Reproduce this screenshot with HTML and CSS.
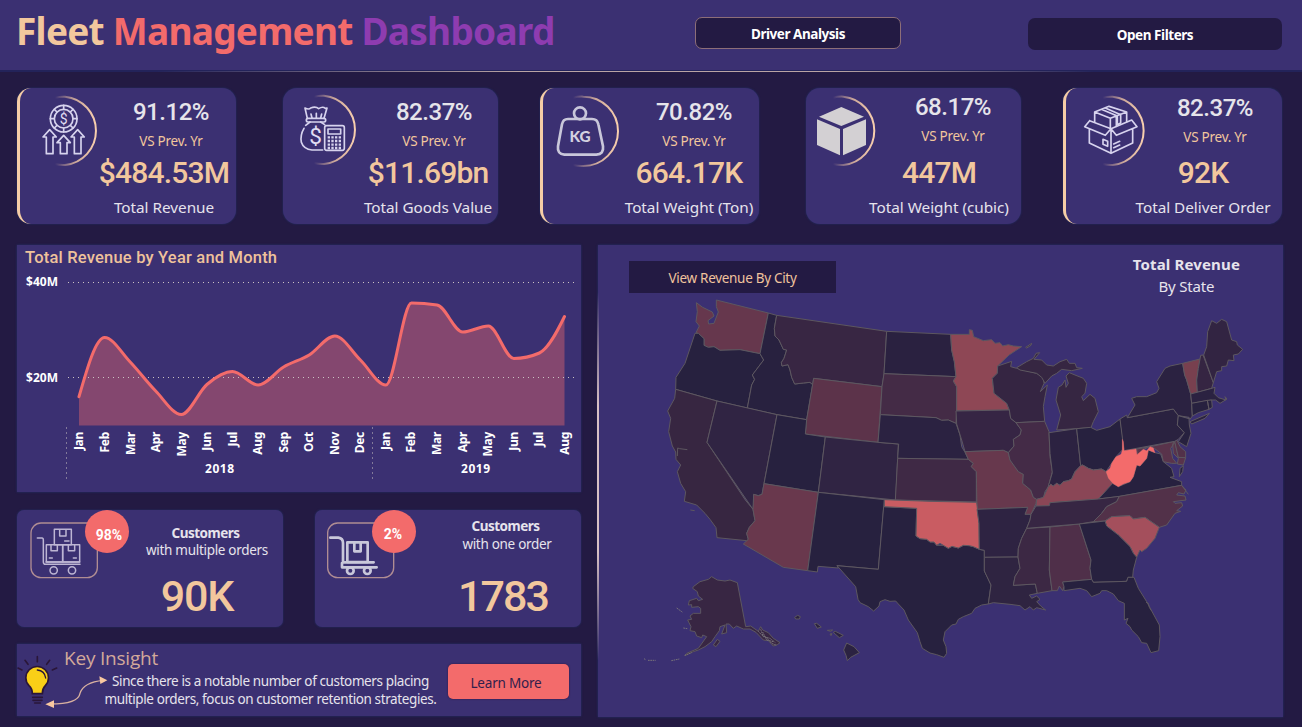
FILE: index.html
```html
<!DOCTYPE html>
<html lang="en">
<head>
<meta charset="utf-8">
<title>Fleet Management Dashboard</title>
<link rel="stylesheet" href="styles.css">
</head>
<body>
<svg class="defs" width="0" height="0">
  <defs>
    <linearGradient id="arc" x1="0" x2="1" y1="0" y2="0">
      <stop offset="0" stop-color="#f2c7a5" stop-opacity="0"/>
      <stop offset=".5" stop-color="#f2c7a5" stop-opacity=".8"/>
      <stop offset="1" stop-color="#f8cfae"/>
    </linearGradient>
  </defs>
</svg>
<header class="header">
  <h1 class="title"><span class="t1">Fleet</span> <span class="t2">Management</span> <span class="t3">Dashboard</span></h1>
  <button class="btn btn-driver">Driver Analysis</button>
  <button class="btn btn-filter">Open Filters</button>
</header>

<section class="kpis">
  <article class="kpi accent k1">
    <div class="kpi-top">
      <svg class="kpi-icon" viewBox="90 288 210 210">
        <path class="arc" stroke="url(#arc)" d="M165 293A103 103 0 0 1 195 290A103 103 0 0 1 195 495A103 103 0 0 1 165 492"/>
        <g class="ink">
          <circle cx="191" cy="356" r="40"/><circle cx="191" cy="356" r="28"/>
          <path d="M191 316v12M191 384v12M151 356h12M219 356h12M163 328l8 8M211 376l8 8M219 328l-8 8M171 376l-8 8"/>
          <path d="M149 389l20 22h-10v50h-20v-50h-10zM191 406l20 22h-10v33h-20v-33h-10zM233 389l20 22h-10v50h-20v-50h-10z"/>
        </g>
        <text class="dollar" x="191" y="371" font-size="42">$</text>
      </svg>
      <div class="stat"><b>91.12%</b><span>VS Prev. Yr</span></div>
    </div>
    <div class="total"><strong>$484.53M</strong><span>Total Revenue</span></div>
  </article>
  <article class="kpi k2">
    <div class="kpi-top">
      <svg class="kpi-icon" viewBox="867 288 210 210">
        <path class="arc" stroke="url(#arc)" d="M942 290A103 103 0 0 1 972 287A103 103 0 0 1 972 492A103 103 0 0 1 942 489"/>
        <g class="ink">
          <path d="M922 355l-7-31q12 6 17 0q15-6 24 2q12-8 20-1l5-1l-9 31M936 354l-3-12M949 354v-14M962 354l3-12"/>
          <rect x="919" y="355" width="58" height="11" rx="5"/>
          <path d="M930 366l-13 10M912 385q-12 20-8 42q7 21 32 23h32M962 366l12 8"/>
          <rect x="974" y="377" width="59" height="74" rx="6"/><rect x="984" y="387" width="38" height="15"/>
        </g>
        <path class="keys" d="M983 412h40M983 423h40M983 434h40M983 444h40"/>
        <text class="dollar" x="947" y="432" font-size="68">$</text>
      </svg>
      <div class="stat"><b>82.37%</b><span>VS Prev. Yr</span></div>
    </div>
    <div class="total"><strong>$11.69bn</strong><span>Total Goods Value</span></div>
  </article>
  <article class="kpi accent k3">
    <div class="kpi-top">
      <svg class="kpi-icon" viewBox="345 288 210 210">
        <path class="arc" stroke="url(#arc)" d="M417 293A103 103 0 0 1 448 290A104 104 0 0 1 448 498A103 103 0 0 1 417 495"/>
        <g class="ink thick">
          <circle cx="438" cy="340" r="18"/>
          <path d="M402 357h72q16 0 19 16l14 66q3 24-20 25H391q-22-2-19-25l12-66q3-16 18-16z"/>
        </g>
        <text class="kg" x="438" y="427">KG</text>
      </svg>
      <div class="stat"><b>70.82%</b><span>VS Prev. Yr</span></div>
    </div>
    <div class="total"><strong>664.17K</strong><span>Total Weight (Ton)</span></div>
  </article>
  <article class="kpi k4">
    <div class="kpi-top">
      <svg class="kpi-icon" viewBox="1122 288 210 210">
        <path class="arc" stroke="url(#arc)" d="M1197 293A103 103 0 0 1 1228 290A103 103 0 0 1 1228 495A103 103 0 0 1 1197 492"/>
        <path fill="#d3d0d3" d="M1222 321l68 29l-68 28l-67-28zM1149 358l69 29v79l-69-31zM1296 358l-69 29v79l69-31z"/>
      </svg>
      <div class="stat"><b>68.17%</b><span>VS Prev. Yr</span></div>
    </div>
    <div class="total"><strong>447M</strong><span>Total Weight (cubic)</span></div>
  </article>
  <article class="kpi accent k5">
    <div class="kpi-top">
      <svg class="kpi-icon" viewBox="627 288 210 210">
        <path class="arc" stroke="url(#arc)" d="M704 293A103 103 0 0 1 734 290A103 103 0 0 1 734 495A103 103 0 0 1 704 492"/>
        <g class="ink">
          <path d="M680 365v-29l43-17l53 17v29M680 336l47 19l49-19M727 355v30M700 328l48 20v26l10-5v-25l-46-20M745 349v30"/>
          <path d="M665 362l-15 18l62 26l17-20l-64-24M729 386l16 20l62-26l-16-20l-62 26M664 388v41l65 31l65-31v-41M729 388v72"/>
          <path d="M705 418l14 6v15l-14-6zM737 432l18-8M737 443l18-8"/>
        </g>
      </svg>
      <div class="stat"><b>82.37%</b><span>VS Prev. Yr</span></div>
    </div>
    <div class="total"><strong>92K</strong><span>Total Deliver Order</span></div>
  </article>
</section>

<main class="main">
  <div class="left">
    <section class="panel chart">
      <h2>Total Revenue by Year and Month</h2>
      <svg viewBox="17 270 564 222" width="564" height="222">
        <path class="area" d="M79,396.7 C87.5,367 96,337.5 104.6,337.5 C113.1,337.5 121.6,353.1 130.2,362 C138.7,370.9 147.2,382.3 155.7,391 C164.2,399.7 172.8,414.5 181.3,414.5 C189.8,414.5 198.4,391.7 206.9,384.5 C215.4,377.3 224,371.5 232.5,371.5 C241,371.5 249.6,385 258.1,385 C266.6,385 275.1,372 283.6,367 C292.1,362 300.7,360.2 309.2,355 C317.7,349.8 326.3,336 334.8,336 C343.3,336 351.9,351.8 360.4,360 C368.9,368.2 377.4,385 385.9,385 C394.4,385 403,303 411.5,303 C420,303 428.6,303.7 437.1,305 C445.6,306.3 454.2,332 462.7,332 C471.2,332 479.8,326 488.3,326 C496.8,326 505.3,358.5 513.8,358.5 C522.3,358.5 530.9,356.7 539.4,353 C547.9,349.3 556.5,333 564.5,316.5 V425.5 H79Z"/>
        <path class="grid" d="M68 282.5H575M68 377.5H575"/>
        <path class="grid" d="M66.5 427.5V480M372.5 427.5V480"/>
        <path class="line" d="M79,396.7 C87.5,367 96,337.5 104.6,337.5 C113.1,337.5 121.6,353.1 130.2,362 C138.7,370.9 147.2,382.3 155.7,391 C164.2,399.7 172.8,414.5 181.3,414.5 C189.8,414.5 198.4,391.7 206.9,384.5 C215.4,377.3 224,371.5 232.5,371.5 C241,371.5 249.6,385 258.1,385 C266.6,385 275.1,372 283.6,367 C292.1,362 300.7,360.2 309.2,355 C317.7,349.8 326.3,336 334.8,336 C343.3,336 351.9,351.8 360.4,360 C368.9,368.2 377.4,385 385.9,385 C394.4,385 403,303 411.5,303 C420,303 428.6,303.7 437.1,305 C445.6,306.3 454.2,332 462.7,332 C471.2,332 479.8,326 488.3,326 C496.8,326 505.3,358.5 513.8,358.5 C522.3,358.5 530.9,356.7 539.4,353 C547.9,349.3 556.5,333 564.5,316.5"/>
        <g class="axis">
          <text x="26" y="286" textLength="32">$40M</text><text x="26" y="382" textLength="32">$20M</text>
          <text x="205" y="473" textLength="29">2018</text><text x="461" y="473" textLength="29">2019</text>
          <g class="months">
            <text transform="translate(83 432) rotate(-90)">Jan</text><text transform="translate(109 432) rotate(-90)">Feb</text><text transform="translate(135 432) rotate(-90)">Mar</text><text transform="translate(160 432) rotate(-90)">Apr</text><text transform="translate(186 432) rotate(-90)">May</text><text transform="translate(211 432) rotate(-90)">Jun</text><text transform="translate(237 432) rotate(-90)">Jul</text><text transform="translate(262 432) rotate(-90)">Aug</text><text transform="translate(288 432) rotate(-90)">Sep</text><text transform="translate(313 432) rotate(-90)">Oct</text><text transform="translate(339 432) rotate(-90)">Nov</text><text transform="translate(364 432) rotate(-90)">Dec</text><text transform="translate(390 432) rotate(-90)">Jan</text><text transform="translate(415 432) rotate(-90)">Feb</text><text transform="translate(441 432) rotate(-90)">Mar</text><text transform="translate(467 432) rotate(-90)">Apr</text><text transform="translate(492 432) rotate(-90)">May</text><text transform="translate(518 432) rotate(-90)">Jun</text><text transform="translate(543 432) rotate(-90)">Jul</text><text transform="translate(569 432) rotate(-90)">Aug</text>
          </g>
        </g>
      </svg>
    </section>

    <div class="customers">
      <section class="panel cust c1">
        <div class="cart">
          <svg viewBox="90 65 207 171" width="69" height="57">
            <rect class="frame" x="93" y="68" width="199" height="164" rx="30"/>
            <g class="ink">
              <path d="M112 113h14q4 0 4 6v66q0 7 7 7h103M138 185h101"/>
              <rect x="163" y="87" width="51" height="46"/><rect x="139" y="133" width="49" height="52"/><rect x="188" y="133" width="51" height="52"/>
              <path d="M179 88v19h19v-19M153 134v17h19v-17M205 134v17h19v-17M194 122h13M148 173h9M220 173h9"/>
              <circle cx="161" cy="210" r="11"/><circle cx="216" cy="210" r="11"/>
            </g>
          </svg>
          <span class="badge">98%</span>
        </div>
        <div class="cust-text"><b>Customers</b><span>with multiple orders</span><strong>90K</strong></div>
      </section>
      <section class="panel cust c2">
        <div class="cart">
          <svg viewBox="81 65 207 171" width="69" height="57">
            <rect class="frame" x="83" y="68" width="198" height="164" rx="30"/>
            <g class="ink thick">
              <path d="M91 112h24q14 2 14 16v58h92M126 188v13h104"/>
              <rect x="142" y="126" width="61" height="59"/><path d="M163 126v27h19v-27"/>
              <circle cx="151" cy="211" r="10"/><circle cx="202" cy="211" r="10"/>
            </g>
          </svg>
          <span class="badge">2%</span>
        </div>
        <div class="cust-text"><b>Customers</b><span>with one order</span><strong>1783</strong></div>
      </section>
    </div>

    <section class="panel insight">
      <svg viewBox="51 435 276 216" width="92" height="72">
        <g fill="none" stroke="#2a1638" stroke-width="5" stroke-linecap="round">
          <path d="M112 473v15M75 484l9 12M149 484l-9 12M54 507l12 6M170 507l-13 6"/>
          <path fill="#f9cf17" d="M97 584q0-15-10-24a34 34 0 1 1 49 0q-9 9-9 24z"/>
          <path d="M112 513q22 2 25 24" stroke-width="4"/>
          <path d="M98 595h29M99 604h27M104 612h17"/>
        </g>
        <path fill="none" stroke="#d8b0a0" stroke-width="4" d="M150 615q85 0 90-32q10-33 70-39"/>
        <path fill="#f8c8a0" d="M322 544l-24-12l3 23zM136 616l26-12v23z"/>
      </svg>
      <div class="insight-text">
        <h3>Key Insight</h3>
        <p>Since there is a notable number of customers placing<br>multiple orders, focus on customer retention strategies.</p>
      </div>
      <button class="learn">Learn More</button>
    </section>
  </div>

  <section class="panel map">
    <div class="map-head">
      <button class="city">View Revenue By City</button>
      <div class="map-title"><b>Total Revenue</b><span>By State</span></div>
    </div>
    <svg class="states" viewBox="-126 15 2055 1266" width="685" height="422">
      <g>
        <path fill="#66374d" d="M169,38 188,52 217,66 222,78 204,92 206,102 222,100 228,84 235,66 229,50 229,30 385,69 360,191 300,179 240,181 222,170 205,172 192,166 192,146 175,130 168,128 178,108 168,95 172,65Z"/>
        <path fill="#27213f" d="M165,130 175,130 192,146 192,166 205,172 222,170 240,181 300,179 360,191 371,210 337,255 344,268 335,285 322,354 231,333 107,298 108,262 135,220Z"/>
        <path fill="#28213f" d="M385,69 410,76 403,115 405,138 417,150 430,178 440,180 432,205 424,218 426,228 444,224 450,240 455,262 464,282 490,279 510,277 518,284 500,389 411,374 322,354 335,285 344,268 337,255 371,210 360,191Z"/>
        <path fill="#382643" d="M410,76 740,124 732,252 726,290 521,265 518,284 510,277 490,279 464,282 455,262 450,240 444,224 426,228 424,218 432,205 440,180 430,178 417,150 405,138 403,115Z"/>
        <path fill="#5c334a" d="M521,265 726,290 714,457 496,432 500,389Z"/>
        <path fill="#372641" d="M107,298 231,333 201,457 316,630 339,658 345,692 328,712 320,730 325,748 320,752 231,743 228,713 210,688 195,670 170,645 133,634 137,605 122,580 112,545 122,525 108,508 107,486 97,468 86,425 92,385 83,363 104,325Z"/>
        <path d="M112,498 113,474 119,476 142,479" fill="none"/>
        <path fill="#302443" d="M231,333 411,374 372,581 366,613 355,617 341,613 341,640 339,658 201,457Z"/>
        <path fill="#27213f" d="M411,374 500,389 496,432 556,441 535,607 372,581Z"/>
        <path fill="#302443" d="M556,441 714,457 775,462 767,630 535,607Z"/>
        <path fill="#69384d" d="M372,581 535,607 503,842 430,832 310,762 325,748 320,730 328,712 345,692 339,658 341,613 355,617 366,613Z"/>
        <path fill="#27213f" d="M535,607 733,629 715,838 591,827 595,834 534,829 532,846 503,842Z"/>
      </g>
      <g transform="translate(660 0)">
        <path fill="#2a2140" d="M80,124 272,133 275,180 283,215 288,260 72,251Z"/>
        <path fill="#442b46" d="M72,251 288,260 280,273 290,290 290,362 288,400 265,390 245,391 228,383 61,374 66,290Z"/>
        <path fill="#8e4755" d="M272,133 328,133 328,119 337,121 341,140 370,152 395,149 405,160 420,158 428,168 445,164 460,168 485,170 447,195 413,228 412,250 397,265 402,310 440,340 448,360 290,362 290,290 280,273 288,260 283,215 275,180Z"/>
        <path fill="#2b2241" d="M61,374 228,383 245,391 265,390 288,400 300,435 305,470 315,487 325,508 113,505 116,462 54,457Z"/>
        <path fill="#362544" d="M288,363 448,360 452,385 468,398 484,420 480,435 460,448 462,468 445,488 430,481 315,485 305,450 290,402Z"/>
        <path fill="#3f2945" d="M113,505 325,508 340,520 334,530 349,545 349,636 106,630Z"/>
        <path fill="#67384d" d="M315,485 430,481 445,488 450,510 475,545 490,553 488,580 512,600 520,622 530,628 528,640 513,673 495,673 503,652 351,658 349,545 334,530 340,520 325,508Z"/>
        <path fill="#352542" d="M413,228 455,214 452,230 470,235 530,250 550,262 552,280 541,305 562,285 555,320 550,350 554,394 468,398 452,385 448,360 440,340 402,310 397,265 412,250Z"/>
        <path fill="#362642" d="M470,233 500,215 520,205 528,190 539,188 522,208 545,210 560,225 580,228 600,215 620,208 628,220 645,220 650,233 667,235 635,242 605,238 590,250 575,258 555,280 545,262 530,250 480,240ZM497,172 515,160 513,166 500,174Z"/>
        <path fill="#442b47" d="M468,398 554,394 567,425 570,500 577,545 565,590 555,605 550,625 530,628 520,622 512,600 488,580 490,553 475,545 450,510 445,488 462,468 460,448 480,435 484,420Z"/>
      </g>
      <g transform="translate(1200 30)">
        <path fill="#362642" d="M88,218 105,225 130,235 140,250 135,280 125,290 130,302 150,283 165,295 175,335 160,365 153,383 50,390 62,345 48,300 55,262 66,255 75,240 78,262 85,250 78,228Z"/>
        <path fill="#2c2241" d="M27,398 110,386 122,497 105,515 95,537 85,542 70,545 60,556 50,550 40,558 32,553 24,562 37,518 30,460Z"/>
        <path fill="#27213f" d="M110,386 152,382 170,391 210,380 240,357 250,420 247,450 228,470 215,490 198,515 185,507 160,510 145,505 128,495 122,497Z"/>
        <path fill="#8a4656" d="M122,497 128,495 145,505 160,510 185,507 198,515 205,535 218,550 190,590 175,598 30,608 28,618 -12,620 -10,598 10,592 18,575 24,562 32,553 40,558 50,550 60,556 70,545 85,542 95,537 105,515Z"/>
        <path fill="#27213f" d="M345,458 362,462 370,485 395,505 402,530 390,532 425,545 425,556 235,590 175,597 218,550 235,560 270,545 280,530 290,495 300,498 320,475 325,450ZM430,497 428,515 418,530 420,505Z"/>
        <path fill="#59334b" d="M290,447 345,437 404,424 400,434 392,445 398,475 410,490 395,490 370,485 365,462 343,445 330,440 310,448 292,465ZM404,424 409,445 415,472 437,473 430,495 412,492 415,475 400,460 398,432Z"/>
        <path fill="#523149" d="M404,424 411,421 420,440 437,455 437,473 415,472Z"/>
        <path fill="#2a2240" d="M240,357 260,345 262,353 400,327 415,347 412,375 433,398 415,418 404,424 252,452Z"/>
        <path fill="#f36b6b" class="hot" d="M247,418 250,425 252,452 288,447 291,464 310,448 320,452 330,440 340,444 345,458 325,450 320,475 300,498 290,495 280,530 270,545 250,552 235,560 218,550 205,535 198,515 210,505 215,490 228,470 243,463 247,450Z"/>
        <path fill="#2b2241" d="M262,353 285,315 275,295 290,290 320,290 350,278 357,265 350,245 375,205 390,198 428,190 434,225 440,240 452,282 455,310 457,348 450,358 447,352 415,347 400,327ZM450,365 480,352 508,340 495,355 455,372Z"/>
        <path fill="#27213f" d="M415,347 447,356 448,375 453,400 440,440 415,425 433,398 412,375Z"/>
        <path fill="#78404f" d="M428,190 480,177 475,205 470,240 472,277 452,282 440,240 434,225Z"/>
        <path fill="#352542" d="M480,177 482,166 489,165 520,248 515,265 472,277 470,240 475,205Z"/>
        <path fill="#322442" d="M491,165 500,140 503,95 515,62 530,70 545,58 560,65 575,120 590,125 592,135 608,148 595,162 580,165 582,182 565,180 560,198 545,200 545,212 530,215 520,248Z"/>
        <path fill="#2b2241" d="M452,282 512,266 525,262 522,280 535,293 558,300 555,290 561,297 540,310 527,300 515,300 455,310Z"/>
        <path fill="#27213f" d="M455,310 502,301 507,328 475,338 457,348ZM502,301 515,300 517,322 507,328Z"/>
      </g>
      <g transform="translate(870 540)">
        <path fill="#27213f" d="M-139,110 -40,115 -42,198 -30,206 -10,208 0,216 12,216 20,226 40,226 55,235 66,229 85,234 100,226 118,227 130,230 148,238 163,241 163,303 183,345 175,402 155,405 135,415 125,430 100,440 85,448 78,462 65,465 45,485 40,510 48,530 50,550 42,562 20,554 0,549 -23,535 -30,515 -38,488 -65,450 -78,420 -95,402 -103,393 -120,394 -135,389 -150,395 -153,408 -169,423 -185,410 -210,398 -216,388 -223,350 -279,287 -155,298Z"/>
        <path fill="#c95c62" d="M-137,89 0,94 140,97 147,160 148,238 130,230 118,227 100,226 85,234 66,229 55,235 40,226 30,220 20,226 12,216 0,216 -10,208 -30,206 -42,198 -40,115 -137,110Z"/>
        <path fill="#2e2342" d="M141,118 293,112 285,133 303,133 300,150 290,175 275,205 265,235 264,261 163,262 163,241 148,238 147,160Z"/>
        <path fill="#2f2441" d="M163,262 264,261 270,295 255,320 250,346 316,342 322,370 298,375 305,385 320,378 330,388 320,395 332,408 347,420 320,413 310,420 300,410 285,420 270,407 240,403 190,398 175,402 183,345 163,303Z"/>
        <path fill="#3c2844" d="M290,175 360,171 358,300 366,362 322,370 316,342 250,346 255,320 270,295 264,261 265,235 275,205Z"/>
        <path fill="#4f2f49" d="M360,171 448,162 483,270 480,295 485,328 398,336 402,350 398,362 388,348 382,362 366,362 358,300Z"/>
        <path fill="#372643" d="M303,133 318,108 358,107 360,98 505,87 568,79 560,95 530,110 515,130 490,155 448,162 290,175 300,150Z"/>
        <path fill="#523149" d="M568,79 755,46 768,60 762,72 745,68 740,75 765,78 768,90 730,95 735,100 755,98 758,108 740,122 752,124 735,130 710,165 688,172 645,142 610,147 600,137 545,140 525,153 490,155 515,130 530,110 560,95Z"/>
        <path fill="#a44f5c" d="M525,153 545,140 600,137 610,147 645,142 688,172 675,205 650,235 635,245 630,240 620,262 610,250 600,230 565,195 530,168Z"/>
        <path fill="#27213f" d="M448,162 525,153 530,168 565,195 600,230 610,250 620,262 610,300 608,322 594,322 590,334 490,337 485,328 480,295 483,270Z"/>
        <path fill="#27213f" d="M398,336 485,328 490,337 590,334 594,322 612,322 625,355 650,395 688,465 690,500 686,542 663,548 650,520 635,518 625,500 605,480 600,470 588,460 594,445 583,450 583,400 565,392 550,372 530,362 515,362 510,370 485,380 470,362 450,355 402,362 402,350Z"/>
        <path fill="none" d="M648,397 655,400 658,412 664,422M755,46 775,73"/>
      </g>
      <g transform="translate(-30 540)">
        <path fill="#382643" d="M245,320 262,330 285,333 300,330 322,338 347,470 362,468 385,484 392,470 398,480 415,488 430,505 450,518 442,524 430,528 415,512 400,510 378,487 360,477 340,477 320,468 310,475 298,462 288,462 290,488 275,492 285,465 270,470 268,482 255,500 245,515 225,530 205,540 190,545 165,557 170,550 205,535 230,500 218,495 215,503 200,498 195,485 180,482 183,470 173,450 185,448 180,438 190,430 212,430 212,415 205,410 185,412 185,404 175,405 178,392 200,385 205,392 218,388 205,378 202,365 188,355 190,350 210,335 235,328ZM250,525 262,508 270,514 258,530Z"/>
        <path fill="none" class="isles" d="M385,484 395,495 410,503 425,520 440,526M392,478 400,500 420,505 436,518M398,486 410,510 430,515M140,414 158,427M160,474 172,476M42,566 48,570M54,571 77,571M124,572 148,567M164,556 185,548"/>
        <path fill="#2b2241" d="M494,442 503,436 511,440 508,447 497,447ZM553,461 560,460 574,471 562,475ZM592,481 608,480 602,484ZM600,492 606,491 603,497ZM610,487 616,484 640,496 628,503ZM650,519 672,530 688,548 662,562 652,572 648,556 641,540Z"/>
        <path fill="none" d="M181,120 194,122"/>
      </g>
    </svg>
  </section>
</main>
</body>
</html>
```
FILE: styles.css
```css
* { box-sizing: border-box; }
body {
  margin: 0;
  width: 1302px;
  height: 727px;
  overflow: hidden;
  background: #231a43;
  color: #e6e3ec;
  font-family: "Noto Sans", "Open Sans", sans-serif;
}
button { font-family: inherit; padding: 0; border: 0; }
h1, h2, h3, p { margin: 0; }
.defs { display: block; }
svg { display: block; flex: none; overflow: visible; }

.header {
  display: grid;
  grid-template-columns: 678px 333px 254px;
  height: 72px;
  padding-left: 17px;
  background: linear-gradient(90deg, transparent 12%, #b9a4a4 40%, #b9a4a4 64%, transparent 84%) 0 71px / 100% 1px no-repeat,
    linear-gradient(#3b3072, #3b3072) 0 0 / 100% 70px no-repeat,
    #23235a;
}
.title { font-size: 37px; line-height: 62px; font-weight: 700; letter-spacing: -.73px; white-space: nowrap; margin-left: -1px; }
.t1 { color: #f2c79d; }
.t2 { color: #f36b6b; }
.t3 { color: #8e3cb0; }
.btn { background: #231a43; color: #fff; font-weight: 700; font-size: 13.5px; letter-spacing: -.45px; height: 32px; border-radius: 7px; }
.btn-driver { width: 206px; margin-top: 17px; border: 1px solid #8d6e78; padding-top: 1px; }
.btn-filter { margin-top: 18px; padding-top: 2px; }

.kpis {
  display: grid;
  grid-template-columns: 266px 257px 266px 257px 219px;
  padding: 16px 0 0 17px;
  height: 152px;
}
.kpi {
  width: 215px;
  height: 136px;
  background: #3b3072;
  border-radius: 14px;
  box-shadow: 0 0 2px #24346c;
  white-space: nowrap;
}
.kpi.accent { width: 219px; border-left: 3px solid #f5cda6; }
.kpi-top { display: flex; height: 65px; padding-top: 8px; }
.kpi-icon { width: 70px; height: 70px; }
.arc { fill: none; stroke-width: 6; }
.ink { fill: none; stroke: #d7d3ee; stroke-width: 5; stroke-linejoin: round; stroke-linecap: round; }
.thick { stroke: #c9c7da; stroke-width: 8; }
.keys { stroke: #d7d3ee; stroke-width: 7; stroke-dasharray: 7 4; }
.dollar { fill: #e0ddf2; text-anchor: middle; font-family: Roboto, sans-serif; }
.kg { fill: #d3d0e0; text-anchor: middle; font: 900 46px Lato, sans-serif; }
.stat { display: flex; flex-direction: column; align-items: center; width: 90px; }
.stat b { font: 500 24px/32px Roboto, sans-serif; color: #e6e4ea; letter-spacing: -.45px; }
.stat span { font-size: 13.5px; line-height: 18px; margin-top: 4px; color: #f2c79d; letter-spacing: -.25px; }
.total { display: flex; flex-direction: column; align-items: center; width: 150px; }
.total strong { font: 500 30px/40px Roboto, sans-serif; color: #f2c79d; letter-spacing: -.8px; }
.total span { font-size: 15.3px; line-height: 22px; margin-top: 3px; letter-spacing: -.02px; }
.k1 .kpi-icon { margin-left: 10px; } .k1 .stat { margin-left: 26px; } .k1 .total { margin-left: 69px; }
.k2 .kpi-icon { margin-left: 6px; } .k2 .stat { margin-left: 30px; } .k2 .total { margin-left: 70px; }
.k3 .kpi-icon { margin-left: 6px; } .k3 .stat { margin-left: 30px; } .k3 .total { margin-left: 71px; }
.k4 .kpi-icon { margin-left: 2px; } .k4 .stat { margin: -5px 0 0 30px; } .k4 .total { margin-left: 58px; }
.k5 .kpi-icon { margin-left: 11px; } .k5 .stat { margin: -4px 0 0 23px; } .k5 .total { margin-left: 62px; }

.main { display: grid; grid-template-columns: 564px 685px; column-gap: 17px; padding: 21px 0 0 17px; }
.panel { background: #3b3072; box-shadow: 0 0 2px #24346c; }
.left { display: flex; flex-direction: column; }
.chart { height: 247px; }
.chart h2 { height: 25px; padding-left: 8px; font: 500 16.5px/25px Roboto, sans-serif; color: #efc29b; letter-spacing: .2px; }
.area { fill: #f36b6b; fill-opacity: .4; }
.line { fill: none; stroke: #f36b6b; stroke-width: 3; stroke-linejoin: round; stroke-linecap: round; }
.grid { stroke: #cbc3c3; stroke-dasharray: 1 4; }
.axis text { fill: #fff; font-size: 12px; font-weight: 700; }
.axis .months text { text-anchor: end; letter-spacing: -.3px; }

.customers { display: flex; justify-content: space-between; margin-top: 18px; }
.cust { display: flex; width: 266px; height: 117px; border-radius: 7px; }
.cart { position: relative; width: 69px; height: 57px; margin: 12px 0 0 13px; }
.c2 .cart { margin-left: 12px; }
.frame { fill: none; stroke: #b08d93; stroke-width: 4; }
.c1 .ink { stroke: #bdb5d3; stroke-width: 4.5; }
.badge {
  position: absolute; left: 55px; top: -12px; width: 44px; height: 43px; border-radius: 50%;
  background: #f36b6b; color: #fff; text-align: center; padding-left: 4px;
  font: 700 14px/50px Roboto, sans-serif;
}
.c2 .badge { left: 45px; line-height: 48px; padding: 0 2px 0 0; }
.cust-text { display: flex; flex-direction: column; align-items: center; width: 140px; white-space: nowrap; margin: 14px 0 0 38px; }
.c2 .cust-text { margin: 7px 0 0 41px; }
.cust-text b { font-size: 13.5px; line-height: 18px; letter-spacing: -.5px; margin-left: -3px; }
.cust-text span { font-size: 13.5px; line-height: 17px; letter-spacing: -.3px; }
.c2 .cust-text span { line-height: 19px; }
.cust-text strong { font: 500 43px/52px Roboto, sans-serif; color: #f2c79d; margin: 11px 20px 0 0; letter-spacing: -1.2px; }
.c2 .cust-text strong { margin: 16px 8px 0 0; letter-spacing: -2px; }

.insight { display: flex; height: 72px; margin-top: 17px; }
.insight-text { width: 339px; white-space: nowrap; margin-left: -11px; }
.insight h3 { font: 400 19px/28px "Open Sans", sans-serif; color: #d3a99a; letter-spacing: -.2px; margin-left: -34px; }
.insight p { font-size: 13.5px; line-height: 18px; text-align: center; letter-spacing: -.39px; margin: 0 0 0 6px; }
.learn { width: 121px; height: 35px; margin: 20px 0 0 11px; background: #f36b6b; color: #31204c; border-radius: 5px; font-size: 13.5px; letter-spacing: -.2px; box-shadow: 0 0 2px #33163a; padding: 3px 5px 0 0; }

.map { width: 685px; height: 472px; position: relative; }
.map::before {
  content: ""; position: absolute; left: -1px; top: 0; width: 2px; height: 472px;
  background: linear-gradient(transparent 10%, #d8c0c4 34%, #d8c0c4 65%, transparent 88%);
}
.map-head { display: flex; justify-content: space-between; height: 50px; padding: 8px 43px 0 31px; }
.city { width: 207px; height: 32px; margin-top: 8px; padding-top: 2px; background: #231a43; color: #f0c39d; font-size: 13.5px; letter-spacing: -.3px; }
.map-title { display: flex; flex-direction: column; align-items: center; font-size: 15px; line-height: 22px; letter-spacing: -.2px; }
.map-title b { letter-spacing: .15px; }
.states path { stroke: #5d5760; stroke-width: 3; stroke-linejoin: round; }
.states .hot { stroke: #f36b6b; stroke-width: 1; }
.states .isles { stroke: #77727a; stroke-dasharray: 5 2; }
```
